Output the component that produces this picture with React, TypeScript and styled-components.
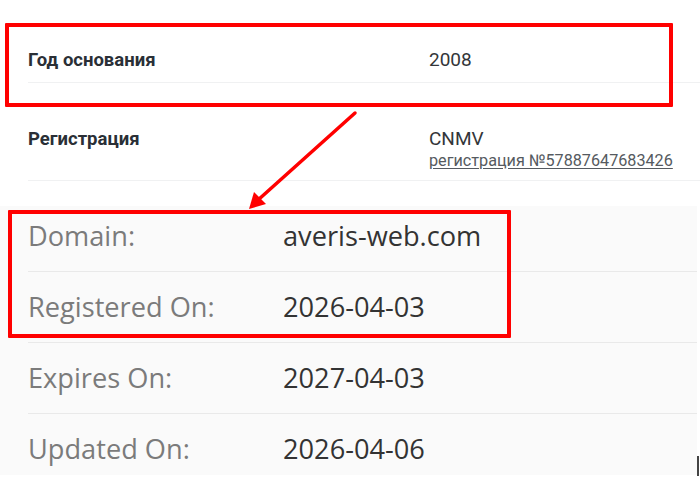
import React from "react";
import styled, { createGlobalStyle } from "styled-components";

const Global = createGlobalStyle`
  html, body { margin: 0; padding: 0; background: #ffffff; }
  body { width: 700px; height: 495px; overflow: hidden; }
`;

const Page = styled.div`
  position: relative;
  width: 700px;
  height: 495px;
  background: #ffffff;
  overflow: hidden;
`;

const CompanyTable = styled.div`
  padding: 4px 0 0 28px;
  font-family: Roboto, "Liberation Sans", Arial, sans-serif;
`;

const CompanyRow = styled.div<{ $pb: number }>`
  display: grid;
  grid-template-columns: 401px 1fr;
  padding: 46px 0 ${(p) => p.$pb}px 0;
  border-bottom: 1px solid #f0f1f2;
  line-height: 20px;
`;

const CompanyLabel = styled.div`
  font-size: 18.5px;
  font-weight: 700;
  color: #2a2f36;
`;

const CompanyValue = styled.div`
  font-size: 19px;
  color: #333639;
  display: flex;
  flex-direction: column;
`;

const RegLink = styled.a`
  margin-top: 2px;
  font-size: 16.2px;
  color: #555a60;
  text-decoration: underline;
  text-underline-offset: 2px;
`;

const WhoisTable = styled.div`
  margin-top: 25px;
  width: 697px;
  background: #fafafa;
  padding-left: 28px;
  box-sizing: border-box;
  font-family: "Open Sans", "Liberation Sans", Arial, sans-serif;
`;

const WhoisRow = styled.div<{ $pt: number; $pb: number; $last?: boolean }>`
  display: grid;
  grid-template-columns: 255px 1fr;
  padding: ${(p) => p.$pt}px 0 ${(p) => p.$pb}px 0;
  border-bottom: ${(p) => (p.$last ? "none" : "1px solid #e9e9e9")};
  line-height: 36px;
  font-size: 27.2px;
`;

const WhoisLabel = styled.div`
  color: #7b7b7b;
`;

const WhoisValue = styled.div`
  color: #333333;
`;

const RedBox = styled.div<{ $x: number; $y: number; $w: number; $h: number }>`
  position: absolute;
  left: ${(p) => p.$x}px;
  top: ${(p) => p.$y}px;
  width: ${(p) => p.$w}px;
  height: ${(p) => p.$h}px;
  border: 4px solid #ff0000;
  box-sizing: border-box;
  border-radius: 1px;
  pointer-events: none;
`;

const ArrowSvg = styled.svg`
  position: absolute;
  left: 0;
  top: 0;
  pointer-events: none;
`;

const Caret = styled.div`
  position: absolute;
  left: 697px;
  top: 456px;
  width: 2px;
  height: 20px;
  background: #444;
`;

const whois = [
  { label: "Domain:", value: "averis-web.com" },
  { label: "Registered On:", value: "2026-04-03" },
  { label: "Expires On:", value: "2027-04-03" },
  { label: "Updated On:", value: "2026-04-06" },
];

export default function App() {
  return (
    <Page>
      <Global />
      <CompanyTable>
        <CompanyRow $pb={12}>
          <CompanyLabel>Год основания</CompanyLabel>
          <CompanyValue>2008</CompanyValue>
        </CompanyRow>
        <CompanyRow $pb={9}>
          <CompanyLabel>Регистрация</CompanyLabel>
          <CompanyValue>
            <span>CNMV</span>
            <RegLink href="#">регистрация №57887647683426</RegLink>
          </CompanyValue>
        </CompanyRow>
      </CompanyTable>
      <WhoisTable>
        {whois.map((r, i) => (
          <WhoisRow
            key={r.label}
            $pt={i === 0 ? 12 : 17}
            $pb={i === whois.length - 1 ? 8 : 17}
            $last={i === whois.length - 1}
          >
            <WhoisLabel>{r.label}</WhoisLabel>
            <WhoisValue>{r.value}</WhoisValue>
          </WhoisRow>
        ))}
      </WhoisTable>
      <RedBox $x={5} $y={23} $w={668} $h={84} />
      <RedBox $x={8} $y={210} $w={503} $h={128} />
      <ArrowSvg width="700" height="495" viewBox="0 0 700 495">
        <line x1="355" y1="113" x2="258" y2="200" stroke="#ff0000" strokeWidth="3.5" strokeLinecap="round" />
        <polygon points="249,209 254,192 266,204" fill="#ff0000" />
      </ArrowSvg>
      <Caret />
    </Page>
  );
}
